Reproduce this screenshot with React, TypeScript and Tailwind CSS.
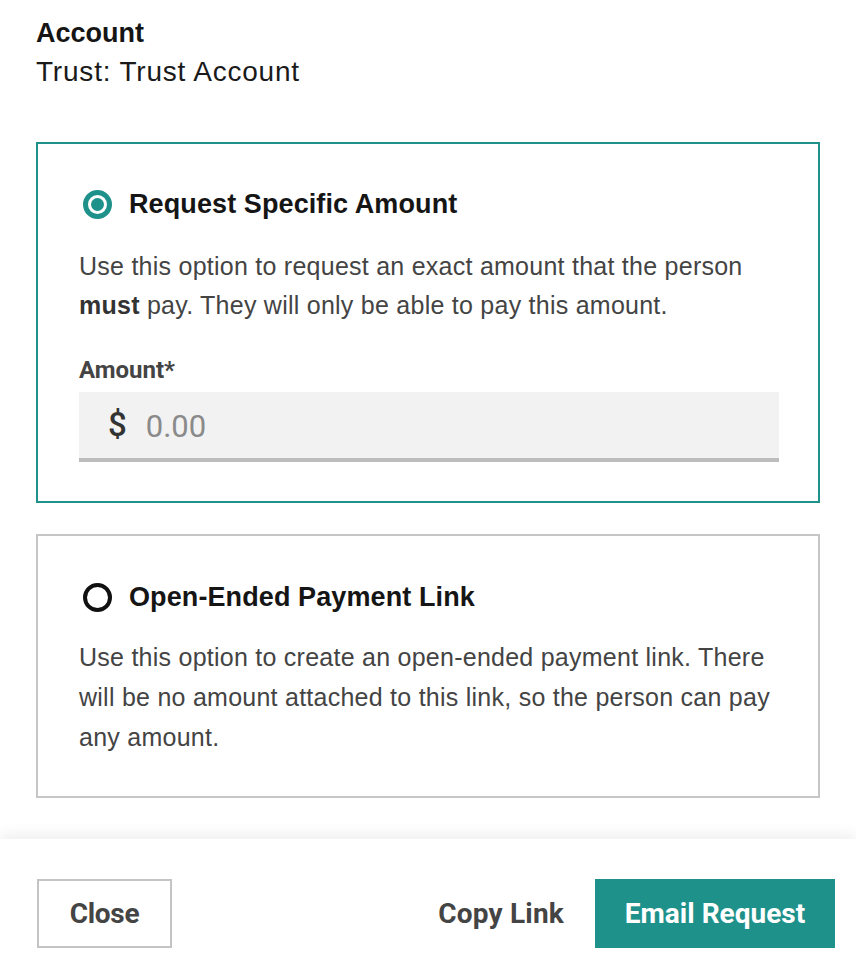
import React from "react";

const sans = { fontFamily: '"Liberation Sans", Arial, sans-serif' };
const robo = { fontFamily: 'Roboto, "Liberation Sans", sans-serif' };

function Radio({ checked }: { checked: boolean }) {
  if (checked) {
    return (
      <span className="flex h-[29px] w-[29px] shrink-0 items-center justify-center rounded-full border-[5px] border-[#1f918b]">
        <span className="h-[13px] w-[13px] rounded-full bg-[#1f918b]" />
      </span>
    );
  }
  return (
    <span className="h-[29px] w-[29px] shrink-0 rounded-full border-[4px] border-[#111]" />
  );
}

function OptionCard({
  checked,
  title,
  children,
}: {
  checked: boolean;
  title: string;
  children: React.ReactNode;
}) {
  return (
    <div
      className={
        checked
          ? "border-2 border-[#1f918b] pl-[41px] pr-[30px] pt-[43px] pb-[39px]"
          : "border-2 border-[#c6c6c6] pl-[41px] pr-[30px] pt-[44px] pb-[39px]"
      }
    >
      <div className="flex items-center gap-[17px] pl-[4px] h-[34px]">
        <Radio checked={checked} />
        <span className="text-[27px] font-bold tracking-[0.1px] text-[#151515]">{title}</span>
      </div>
      {children}
    </div>
  );
}

export default function App() {
  return (
    <div className="flex min-h-screen flex-col bg-white" style={sans}>
      <div className="px-[36px] pt-[16px]">
        <div className="text-[27px] font-bold leading-[34px] text-[#151515]">Account</div>
        <div className="mt-[5px] text-[28px] leading-[34px] tracking-[0.8px] text-[#1a1a1a]">
          Trust: Trust Account
        </div>

        <div className="mt-[53px] flex flex-col gap-[31px]">
          <OptionCard checked title="Request Specific Amount">
            <p className="mt-[26px] text-[25px] leading-[39px] tracking-[0.25px] text-[#444]">
              Use this option to request an exact amount that the person{" "}
              <b className="text-[#333]">must</b> pay. They will only be able to pay this amount.
            </p>
            <div className="mt-[30px] text-[24px] font-bold leading-[30px] text-[#444]" style={robo}>
              Amount*
            </div>
            <div
              className="mt-[7px] flex h-[70px] w-[700px] items-center gap-[19px] border-b-[4px] border-[#bdbdbd] bg-[#f2f2f2] pl-[29px]"
              style={robo}
            >
              <span className="text-[33px] font-medium text-[#333]">$</span>
              <span className="mt-[4px] text-[31px] text-[#8a8a8a]">0.00</span>
            </div>
          </OptionCard>

          <OptionCard checked={false} title="Open-Ended Payment Link">
            <p className="mt-[23px] text-[25px] leading-[40px] tracking-[0.25px] text-[#444]">
              Use this option to create an open-ended payment link. There will be no amount
              attached to this link, so the person can pay any amount.
            </p>
          </OptionCard>
        </div>
      </div>

      <div
        className="mt-[41px] flex items-center justify-between bg-white pl-[37px] pr-[21px] pt-[40px] pb-[25px] shadow-[0_-6px_12px_rgba(0,0,0,0.06)]"
        style={robo}
      >
        <button className="h-[69px] w-[135px] border-2 border-[#c4c4c4] text-[28px] font-bold tracking-[-0.3px] text-[#444]">
          Close
        </button>
        <div className="flex items-center gap-[31px]">
          <button className="text-[28px] font-bold tracking-[0.2px] text-[#444]">Copy Link</button>
          <button className="h-[69px] w-[240px] bg-[#1f918b] text-[28px] font-bold text-white">
            Email Request
          </button>
        </div>
      </div>
    </div>
  );
}
